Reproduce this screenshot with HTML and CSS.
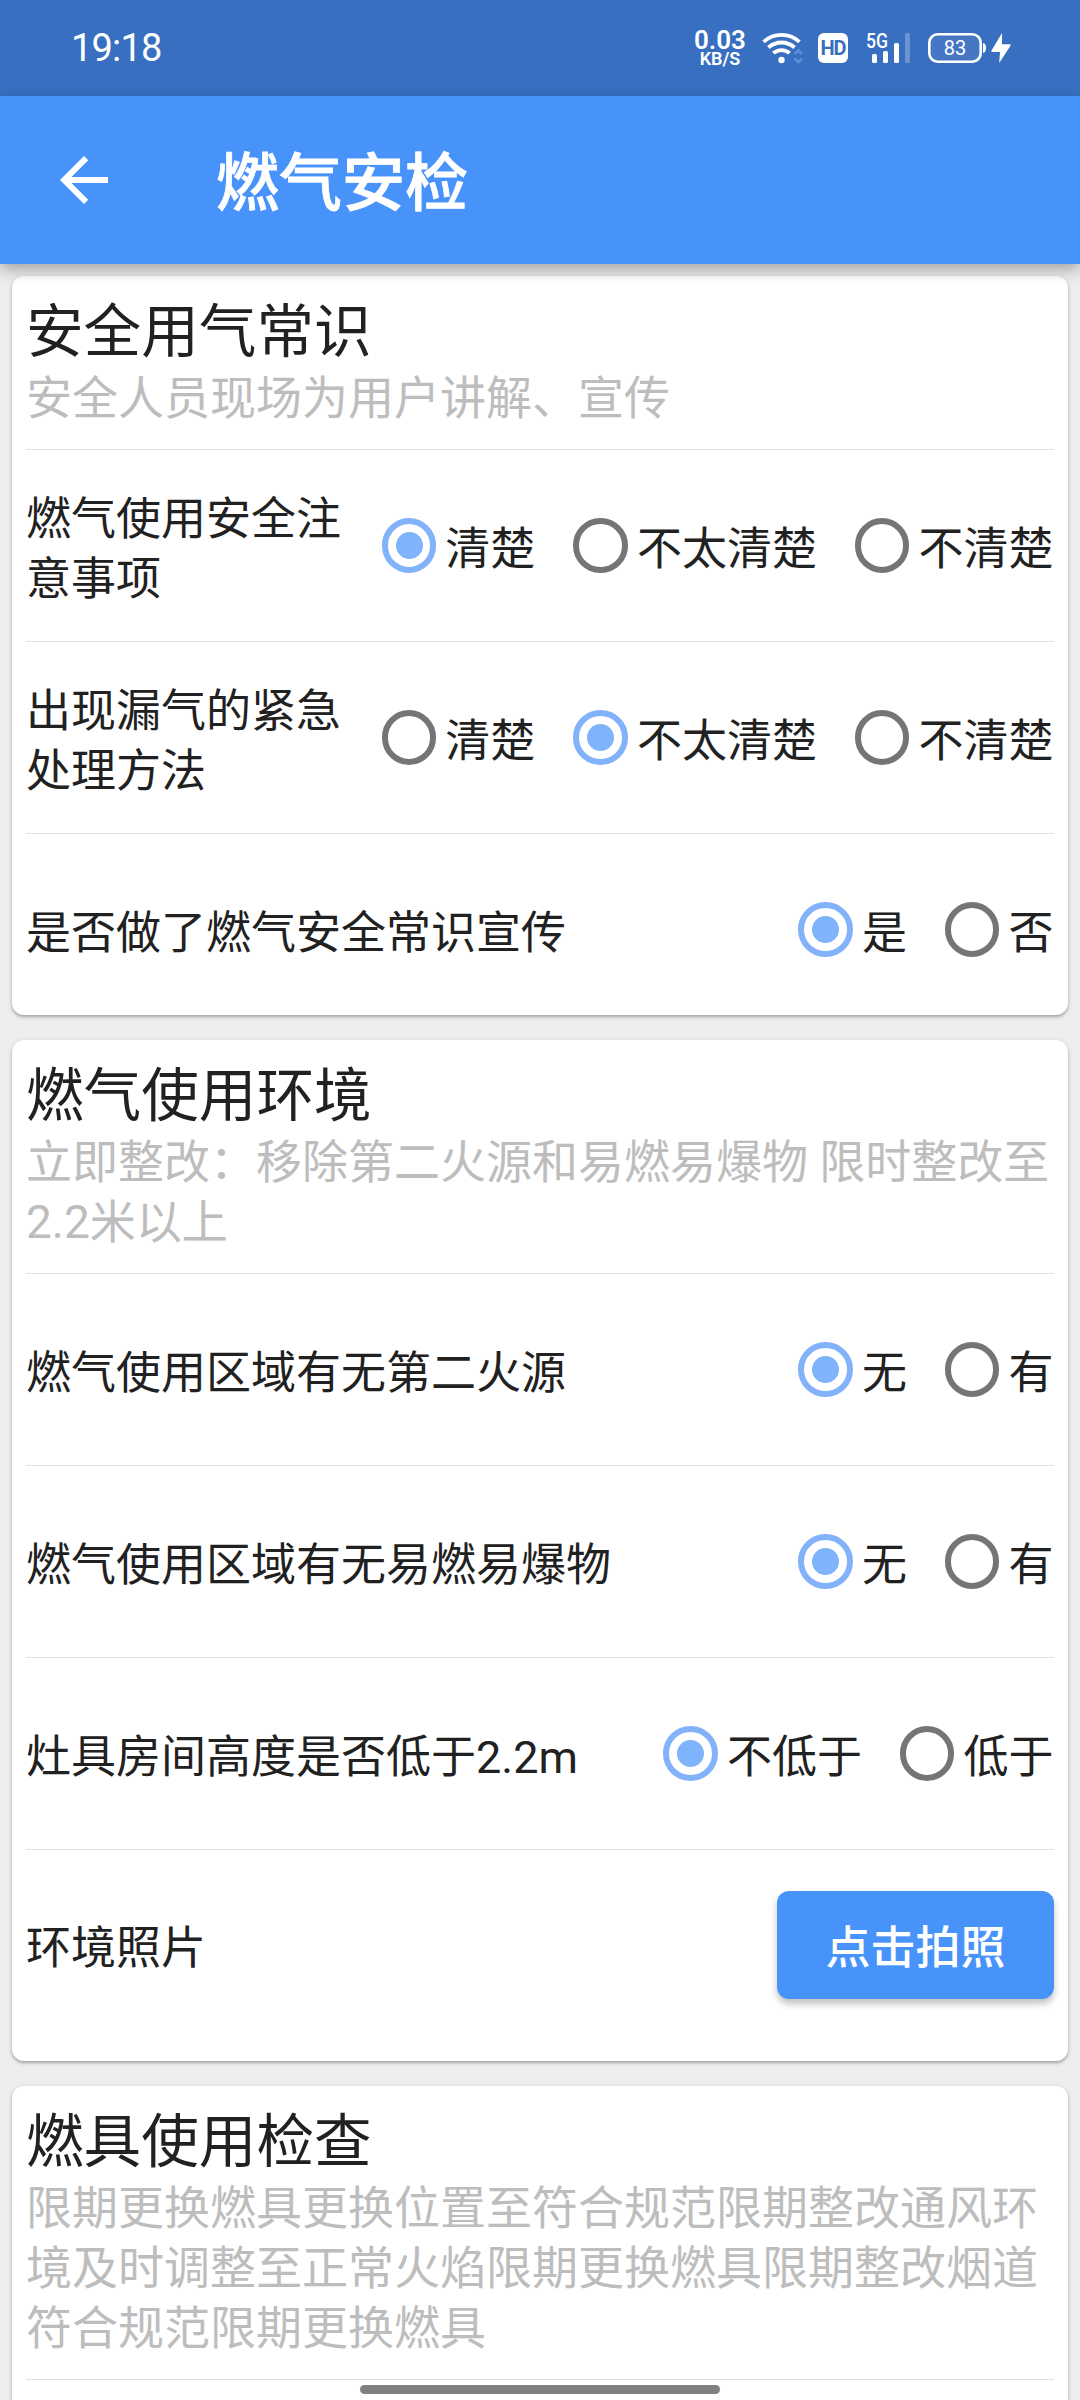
FILE: index.html
```html
<!DOCTYPE html>
<html lang="zh-CN">
<head>
<meta charset="utf-8">
<title>燃气安检</title>
<link rel="stylesheet" href="styles.css">
</head>
<body>
<div class="screen">
  <header class="status">
    <span class="time">19:18</span>
    <div class="status-icons">
      <div class="speed"><span class="speed-value">0.03</span><span class="speed-unit">KB/S</span></div>
      <svg class="wifi" width="42" height="32" viewBox="0 0 42 32" fill="none">
        <g stroke="#fff" stroke-width="3.8">
          <path d="M1.500 9.800C12 .5 27 .5 37.500 9.800"/>
          <path d="M6.400 15.500C14 8.800 25 8.800 32.600 15.500"/>
          <path d="M11.400 21.200C16 17 23 17 27.600 21.200"/>
        </g>
        <circle cx="19.500" cy="28" r="3.200" fill="#fff"/>
        <path d="M32.500 22 36.300 18.500l3.800 3.500M32.500 26.500l3.800 3.500 3.800-3.500" stroke="#5b8fd6" stroke-width="2.800"/>
      </svg>
      <span class="hd">HD</span>
      <svg class="signal" width="46" height="48" viewBox="0 -8 46 48" fill="#fff">
        <text x="0" y="16" class="net" textLength="22" lengthAdjust="spacingAndGlyphs">5G</text>
        <rect x="6" y="22" width="5" height="9" rx="1.500"/>
        <rect x="17" y="19" width="5" height="12" rx="1.500"/>
        <rect x="28" y="11" width="5" height="20" rx="1.500"/>
        <rect x="39" y="1" width="5" height="30" rx="1.500" fill="#6c94d0"/>
      </svg>
      <svg class="battery" width="84" height="32" viewBox="0 0 84 32" fill="#fff">
        <rect x="1.300" y="2.300" width="51.400" height="27.400" rx="8.500" fill="#4677c5" stroke="#fff" stroke-width="2.600"/>
        <path d="M55 11c2 .5 3 2 3 5s-1 4.500-3 5z"/>
        <text x="27" y="23.300" text-anchor="middle" class="level">83</text>
        <path d="M74 1 63.500 18.500c-.5.9 0 1.500.8 1.500H72l-.8 11L82.500 13.800c.5-.9 0-1.600-.8-1.600H74z"/>
      </svg>
    </div>
  </header>
  <nav class="appbar">
    <svg class="back" width="72" height="72" viewBox="0 0 24 24" fill="#fff"><path d="M20 11H7.830l5.590-5.590L12 4l-8 8 8 8 1.410-1.410L7.830 13H20v-2z"/></svg>
    <h1 class="appbar-title">燃气安检</h1>
  </nav>
  <main class="content">
    <section class="card">
      <div class="card-head">
        <h2 class="title">安全用气常识</h2>
        <p class="subtitle">安全人员现场为用户讲解、宣传</p>
      </div>
      <div class="row">
        <span class="label">燃气使用安全注意事项</span>
        <div class="options">
          <span class="option"><i class="radio on"></i>清楚</span>
          <span class="option"><i class="radio"></i>不太清楚</span>
          <span class="option"><i class="radio"></i>不清楚</span>
        </div>
      </div>
      <div class="row">
        <span class="label">出现漏气的紧急处理方法</span>
        <div class="options">
          <span class="option"><i class="radio"></i>清楚</span>
          <span class="option"><i class="radio on"></i>不太清楚</span>
          <span class="option"><i class="radio"></i>不清楚</span>
        </div>
      </div>
      <div class="row row-last">
        <span class="label">是否做了燃气安全常识宣传</span>
        <div class="options">
          <span class="option"><i class="radio on"></i>是</span>
          <span class="option"><i class="radio"></i>否</span>
        </div>
      </div>
    </section>
    <section class="card">
      <div class="card-head">
        <h2 class="title">燃气使用环境</h2>
        <p class="subtitle">立即整改：移除第二火源和易燃易爆物 限时整改至<span class="num">2.2</span>米以上</p>
      </div>
      <div class="row">
        <span class="label">燃气使用区域有无第二火源</span>
        <div class="options">
          <span class="option"><i class="radio on"></i>无</span>
          <span class="option"><i class="radio"></i>有</span>
        </div>
      </div>
      <div class="row">
        <span class="label">燃气使用区域有无易燃易爆物</span>
        <div class="options">
          <span class="option"><i class="radio on"></i>无</span>
          <span class="option"><i class="radio"></i>有</span>
        </div>
      </div>
      <div class="row">
        <span class="label">灶具房间高度是否低于<span class="num">2.2m</span></span>
        <div class="options">
          <span class="option"><i class="radio on"></i>不低于</span>
          <span class="option"><i class="radio"></i>低于</span>
        </div>
      </div>
      <div class="row row-photo">
        <span class="label">环境照片</span>
        <button class="button" type="button">点击拍照</button>
      </div>
    </section>
    <section class="card">
      <div class="card-head">
        <h2 class="title">燃具使用检查</h2>
        <p class="subtitle">限期更换燃具更换位置至符合规范限期整改通风环境及时调整至正常火焰限期更换燃具限期整改烟道符合规范限期更换燃具</p>
      </div>
      <div class="row"></div>
    </section>
  </main>
  <div class="home-bar"></div>
</div>
</body>
</html>
```
FILE: styles.css
```css
* { box-sizing: border-box; }
body, h1, h2, p { margin: 0; }
h1, h2 { font-weight: 400; }

.screen {
  position: relative;
  width: 1080px;
  height: 2400px;
  overflow: hidden;
  background: #eeeeee;
  color: #212121;
  font-family: "Noto Sans CJK SC", sans-serif;
  font-size: 45px;
  line-height: 60px;
}

.status {
  display: flex;
  justify-content: space-between;
  height: 96px;
  padding: 0 68px 0 71px;
  background: #386fc0;
  color: #fff;
  font-family: Roboto, sans-serif;
}
.time { font-size: 38px; line-height: 97px; letter-spacing: -0.8px; }
.status-icons { display: flex; align-items: center; }
.speed {
  display: flex;
  flex-direction: column;
  align-items: center;
  width: 52px;
  font-weight: 600;
}
.speed-value { font-size: 26px; line-height: 20px; }
.speed-unit { font-size: 18px; line-height: 17px; }
.wifi { margin-left: 16px; }
.hd {
  width: 30px;
  height: 30px;
  margin-left: 14px;
  border-radius: 6px;
  background: #fff;
  color: #386fc0;
  font-size: 20px;
  font-weight: 700;
  line-height: 31px;
  text-align: center;
  letter-spacing: -1px;
}
.signal { margin-left: 18px; }
.net { font-size: 20px; font-weight: 500; }
.battery { margin-left: 16px; }
.level { font-size: 20px; }

.appbar {
  position: relative;
  display: flex;
  align-items: center;
  height: 168px;
  padding-left: 48px;
  background: #4893fa;
  color: #fff;
  box-shadow: 0 6px 14px rgba(0, 0, 0, 0.3);
}
.appbar-title {
  margin-left: 96px;
  padding-bottom: 4px;
  font-size: 63px;
  font-weight: 500;
  line-height: 84px;
  -webkit-text-stroke: 0.8px #fff;
}

.content {
  display: flex;
  flex-direction: column;
  gap: 25px;
  padding: 12px;
}
.card {
  padding: 15px 14px 0;
  border-radius: 12px;
  background: #fff;
  box-shadow: 0 2px 3px rgba(0, 0, 0, 0.26), 0 1px 6px rgba(0, 0, 0, 0.1);
}
.card-head { padding-bottom: 25px; }
.title { font-size: 57.6px; line-height: 73px; }
.subtitle { color: #bdbdbd; font-size: 46px; line-height: 60px; word-spacing: 1px; }
.num { font-family: Roboto, sans-serif; line-height: 1; }

.row {
  display: flex;
  align-items: center;
  height: 192px;
  border-top: 1px solid #e0e0e0;
}
.row-last { height: 182px; padding-top: 10px; }
.row-photo { height: 212px; padding-bottom: 21px; }
.label { flex: 1; min-width: 0; }
.options { display: flex; gap: 38px; margin-right: 0.6px; }
.option { display: flex; align-items: center; gap: 9px; white-space: nowrap; }
.radio {
  display: grid;
  place-items: center;
  width: 54.5px;
  height: 54.5px;
  border: 6px solid #757575;
  border-radius: 50%;
}
.radio.on { border-color: #82b2f9; }
.radio.on::before {
  content: "";
  width: 27px;
  height: 27px;
  border-radius: 50%;
  background: #7fb3fb;
}
.button {
  width: 277px;
  height: 108px;
  padding: 0;
  border: 0;
  border-radius: 12px;
  background: #4893fa;
  color: #fff;
  font: 500 45px/60px "Noto Sans CJK SC", sans-serif;
  box-shadow: 0 5px 7px rgba(0, 0, 0, 0.24);
}
.home-bar {
  position: absolute;
  left: 360px;
  bottom: 6px;
  width: 360px;
  height: 9px;
  border-radius: 5px;
  background: #808080;
}
```
